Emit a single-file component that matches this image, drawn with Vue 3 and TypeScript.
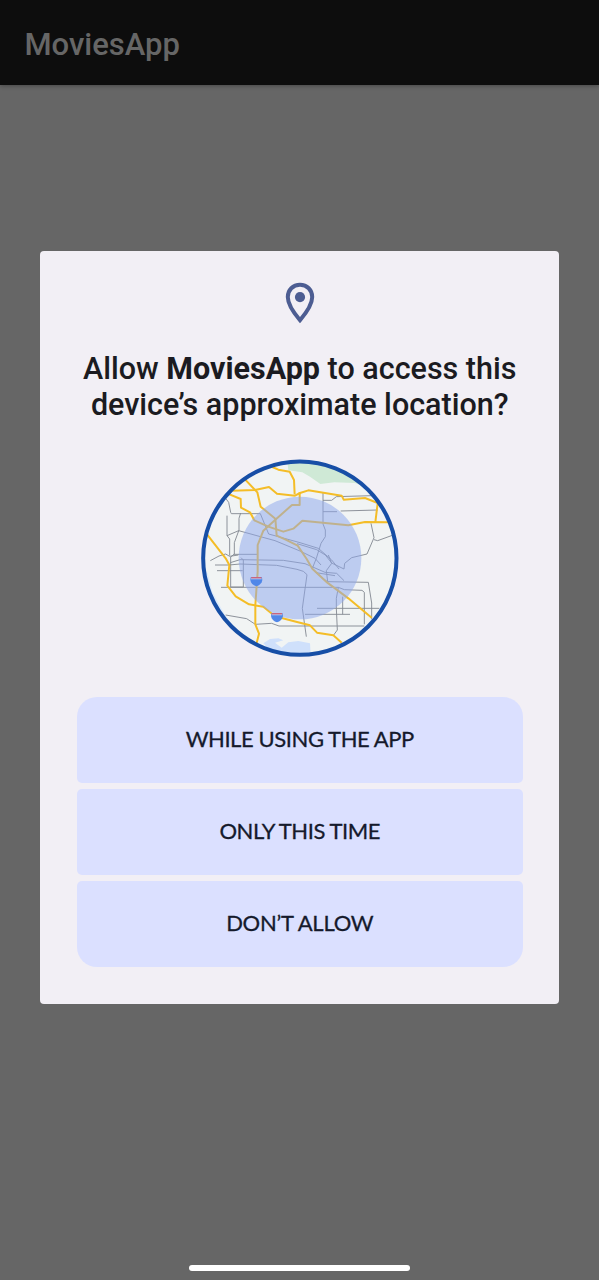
<script setup lang="ts">
const appName = 'MoviesApp'
const actions: string[] = ['WHILE USING THE APP', 'ONLY THIS TIME', 'DON’T ALLOW']

const streets: string[] = [
  'M92 130 L101 142 L107 172 L109 176 H196 L221 237 L315 263 L370 280 L410 315 L432 342',
  'M137 174 L132 190 V225 L118 263 V297 L107 306 V396 H145 V315 L138 308',
  'M96 182 V242 L104 252 V302',
  'M96 242 L131 227 L240 257 L315 288 L360 310 L378 330',
  'M116 298 H188',
  'M46 317 L72 303 L92 297 L104 304 L130 300',
  'M60 330 H102 L135 327 L245 331 L306 343 L325 349 L336 359 L322 460 L334 545',
  'M66 347 H143',
  'M106 323 L135 314 L265 316 L330 326 L390 352 L425 355 L447 377',
  'M78 397 H430 L448 404 L501 406 L508 412 V508',
  'M92 480 L155 491 L181 508 L230 505 L252 513 H508',
  'M384 112 V207 L391 225 V245 L378 265 L364 310 L352 340',
  'M384 136 H410 L424 125 L530 122',
  'M384 170 H426 M437 168 L548 165',
  'M528 205 L537 248 L516 297 L470 308 L449 325 L447 342 L410 324 L391 300 L365 284 L306 266',
  'M537 254 L548 257 L592 241',
  'M400 300 L410 325 L394 347 L398 380 M363 353 L420 362',
  'M352 342 L363 353 L397 380 L520 382 L530 444 V493',
  'M366 460 H553 M330 478 H465',
  'M430 397 L424 430 L424 460 L427 525 L416 540',
  'M443 425 V478',
]

const highways: string[] = [
  'M232 36 L250 44 L284 50 L297 75 L299 118',
  'M150 73 L187 112 L197 155 L241 191 L245 242 L272 254 L308 272 L335 312 L352 341 L397 383 L460 430 L530 488',
  'M110 107 L180 105 L222 96 L246 116 L300 122 L315 114 L340 106 L440 122 L446 134 L510 129 L548 144 L541 202',
  'M98 116 L137 132 L138 158 L165 172 L178 196 L220 215 L265 230 L295 221 L322 197 L460 211 L510 201 L582 202',
  'M36 238 L92 310 L103 330 L97 392 L122 424 L162 448 L205 455 L240 484 L306 501 L345 511 L366 533 L415 541 L440 563',
  'M314 112 V150 H291 L241 194 L205 227 L188 270 V350 L181 450 V508 L192 536 L184 568',
]

const shields: [number, number][] = [
  [184, 379],
  [246, 487],
]
</script>

<template>
  <div class="screen">
    <header class="appbar">{{ appName }}</header>
    <main class="stage">
      <section class="dialog" role="dialog">
        <svg class="pin" viewBox="0 0 30 42">
          <path
            d="M15 2.7C8 2.7 2.8 8 2.8 15c0 7.3 5.4 15.2 12.2 23.2C21.8 30.2 27.2 22.3 27.2 15 27.2 8 22 2.7 15 2.7Z"
            fill="none"
            stroke="#4d5d92"
            stroke-width="4"
          />
          <circle cx="15" cy="15.1" r="5.1" fill="#4d5d92" />
        </svg>
        <h1 class="title">
          Allow <b>{{ appName }}</b> to access this<br />device’s approximate location?
        </h1>
        <svg class="map" viewBox="0 0 621 615">
          <defs>
            <clipPath id="map-clip"><circle cx="314.5" cy="309.5" r="290" /></clipPath>
          </defs>
          <g clip-path="url(#map-clip)">
            <rect width="621" height="615" fill="#f1f4f4" />
            <path d="M276 10 L280 46 L322 52 L345 65 L376 87 L418 82 L480 84 L520 100 L480 10Z" fill="#cfe9d6" />
            <path d="M10 330 L38 355 L52 410 L90 480 L120 520 L60 530 L10 400Z" fill="#dceafb" />
            <path d="M205 565 L225 552 L250 550 L265 556 L240 563 L260 578 L280 562 L310 558 L345 565 L348 615 H250Z" fill="#cfe0fb" />
            <path v-for="(d, i) in streets" :key="`s${i}`" :d="d" class="street" />
            <path v-for="(d, i) in highways" :key="`h${i}`" :d="d" class="highway" />
          </g>
          <circle cx="315" cy="309" r="184" fill="#8da7ec" fill-opacity=".52" />
          <g v-for="([x, y], i) in shields" :key="i" :transform="`translate(${x} ${y})`">
            <path d="M-17 -12 H17 L18 -4 C17 6 9 12 0 15 C-9 12 -17 6 -18 -4Z" fill="#5087e8" />
            <path d="M-15 -13 H15 L16 -8 H-16Z" fill="#c8657f" />
            <path d="M-16 -7.5 H16" stroke="#dbe5fb" stroke-width="2" />
          </g>
          <circle cx="314.5" cy="309.5" r="290" fill="none" stroke="#174ea6" stroke-width="12" />
        </svg>
        <div class="actions">
          <button v-for="label in actions" :key="label" type="button" class="action">{{ label }}</button>
        </div>
      </section>
    </main>
    <div class="home-bar"></div>
  </div>
</template>

<style>
body {
  margin: 0;
  background: #666;
}
</style>

<style scoped>
.screen {
  display: flex;
  flex-direction: column;
  align-items: center;
  width: 599px;
  height: 1280px;
  overflow: hidden;
  background: #666;
  font-family: Roboto, 'Liberation Sans', sans-serif;
}
.appbar {
  box-sizing: border-box;
  width: 100%;
  height: 84.5px;
  padding: 3px 0 0 24.5px;
  flex: none;
  background: #0d0d0d;
  box-shadow: 0 1px 4px rgba(0, 0, 0, 0.3);
  color: #666;
  font-size: 31px;
  font-weight: 500;
  line-height: 83px;
}
.stage {
  flex: 1;
  padding-top: 166.5px;
}
.dialog {
  box-sizing: border-box;
  display: flex;
  flex-direction: column;
  align-items: center;
  width: 519.5px;
  height: 753px;
  padding: 31px 0 0 0.5px;
  border-radius: 4px;
  background: #f2eff5;
}
.pin {
  width: 30px;
  height: 42px;
  flex: none;
}
.title {
  margin: 27px 0 0;
  color: #1b1b21;
  font-size: 30.5px;
  font-weight: 500;
  line-height: 36px;
  text-align: center;
  white-space: nowrap;
}
.title b {
  font-weight: 700;
}
.map {
  width: 207px;
  height: 205px;
  margin: 32px 0 0 -3px;
  flex: none;
}
.street,
.highway {
  fill: none;
  stroke-linejoin: round;
}
.street {
  stroke: #858b93;
  stroke-width: 2.8;
}
.highway {
  stroke: #f4bd27;
  stroke-width: 6;
}
.actions {
  display: grid;
  grid-auto-rows: 85.5px;
  gap: 6.5px;
  width: 446px;
  margin-top: 37px;
}
.action {
  border: 0;
  border-radius: 5px;
  padding: 0 0 3px;
  background: #dbe0ff;
  color: #151a2c;
  font-family: Lato, 'Open Sans', sans-serif;
  font-size: 22px;
  font-weight: 400;
  letter-spacing: -0.42px;
  -webkit-text-stroke: 0.3px #151a2c;
}
.action:last-child {
  border-radius: 5px 5px 20px 20px;
  letter-spacing: -0.25px;
}
.action:first-child {
  border-radius: 20px 20px 5px 5px;
}
.home-bar {
  width: 221px;
  height: 6px;
  margin-bottom: 9px;
  border-radius: 3px;
  background: #fff;
}
</style>
